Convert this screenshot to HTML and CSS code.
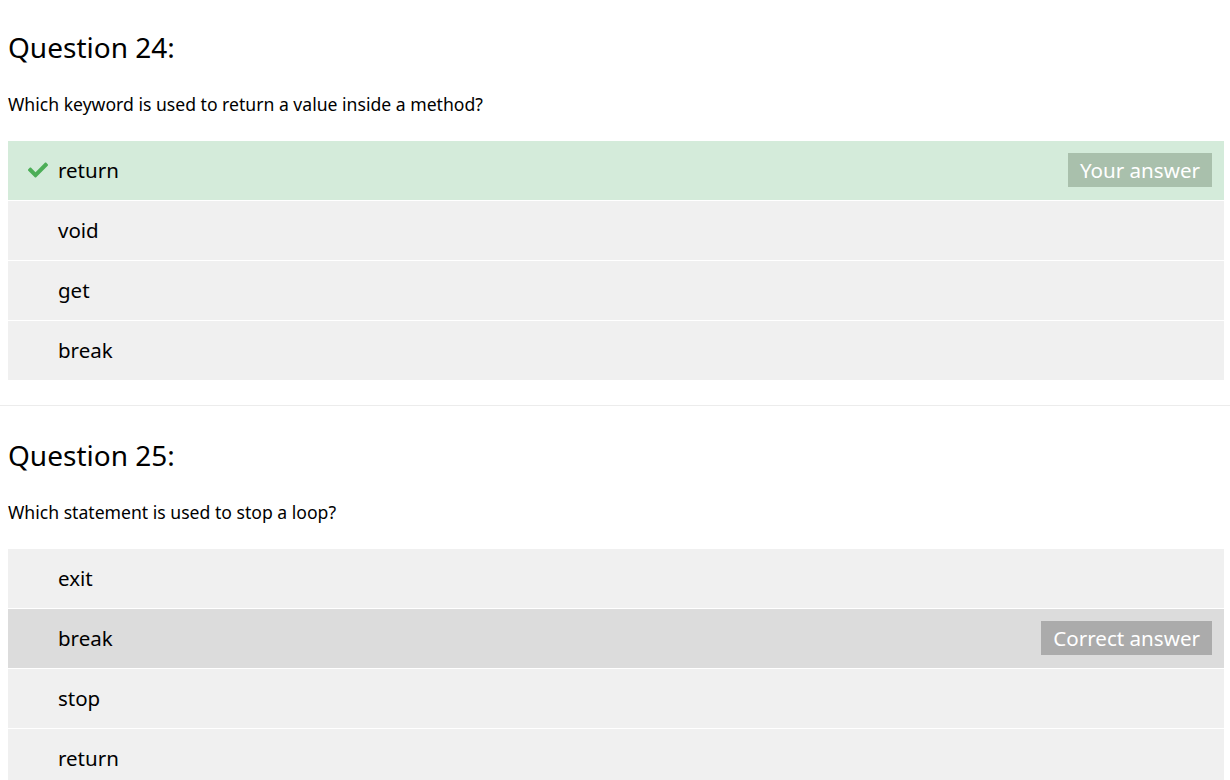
FILE: index.html
```html
<!DOCTYPE html>
<html>
<head>
<meta charset="utf-8">
<link rel="stylesheet" href="styles.css">
</head>
<body>
<section class="question">
  <h2 class="q-title">Question 24:</h2>
  <p class="q-text">Which keyword is used to return a value inside a method?</p>
  <ul class="options">
    <li class="option chosen-correct">
      <span class="mark"><svg viewBox="0 0 512 512" width="20" height="20"><path d="M173.898 439.404l-166.4-166.4c-9.997-9.997-9.997-26.206 0-36.204l36.203-36.204c9.997-9.998 26.207-9.998 36.204 0L192 312.69 432.095 72.596c9.997-9.997 26.207-9.997 36.204 0l36.203 36.204c9.997 9.997 9.997 26.206 0 36.204l-294.4 294.401c-9.998 9.997-26.207 9.997-36.204-.001z" fill="#4cae57"/></svg></span>
      <span class="label">return</span>
      <span class="badge badge-yours">Your answer</span>
    </li>
    <li class="option"><span class="mark"></span><span class="label">void</span></li>
    <li class="option"><span class="mark"></span><span class="label">get</span></li>
    <li class="option"><span class="mark"></span><span class="label">break</span></li>
  </ul>
</section>
<section class="question">
  <h2 class="q-title">Question 25:</h2>
  <p class="q-text">Which statement is used to stop a loop?</p>
  <ul class="options">
    <li class="option"><span class="mark"></span><span class="label">exit</span></li>
    <li class="option correct">
      <span class="mark"></span><span class="label">break</span>
      <span class="badge badge-correct">Correct answer</span>
    </li>
    <li class="option"><span class="mark"></span><span class="label">stop</span></li>
    <li class="option"><span class="mark"></span><span class="label">return</span></li>
  </ul>
</section>
</body>
</html>
```
FILE: styles.css
```css
html, body {
  margin: 0;
  padding: 0;
  background: #ffffff;
}
body {
  font-family: "Noto Sans", "Open Sans", sans-serif;
  color: #000;
}
.question {
  padding: 0 6px 24px 8px;
  border-bottom: 1px solid #ececec;
}
.question + .question {
  padding-top: 2px;
}
.q-title {
  margin: 27px 0 0;
  font-size: 28px;
  line-height: 40px;
  font-weight: 400;
}
.q-text {
  margin: 25px 0 25px;
  font-size: 17.6px;
  line-height: 24px;
}
.options {
  list-style: none;
  margin: 0;
  padding: 0;
}
.option {
  display: flex;
  align-items: center;
  height: 57px;
  border-bottom: 1px solid #ffffff;
  background: #f0f0f0;
  padding: 0 12px 2px 20px;
}
.option.chosen-correct {
  background: #d4ebda;
}
.option.correct {
  background: #dcdcdc;
}
.mark {
  width: 20px;
  height: 20px;
  margin-right: 10px;
  display: flex;
  align-items: center;
}
.label {
  flex: 1;
  font-size: 20.5px;
  line-height: 28px;
}
.badge {
  color: #ffffff;
  font-size: 20.6px;
  line-height: 34px;
  padding: 0 12px;
}
.badge-yours {
  background: #a9c0ac;
}
.badge-correct {
  background: #ababab;
}
```
